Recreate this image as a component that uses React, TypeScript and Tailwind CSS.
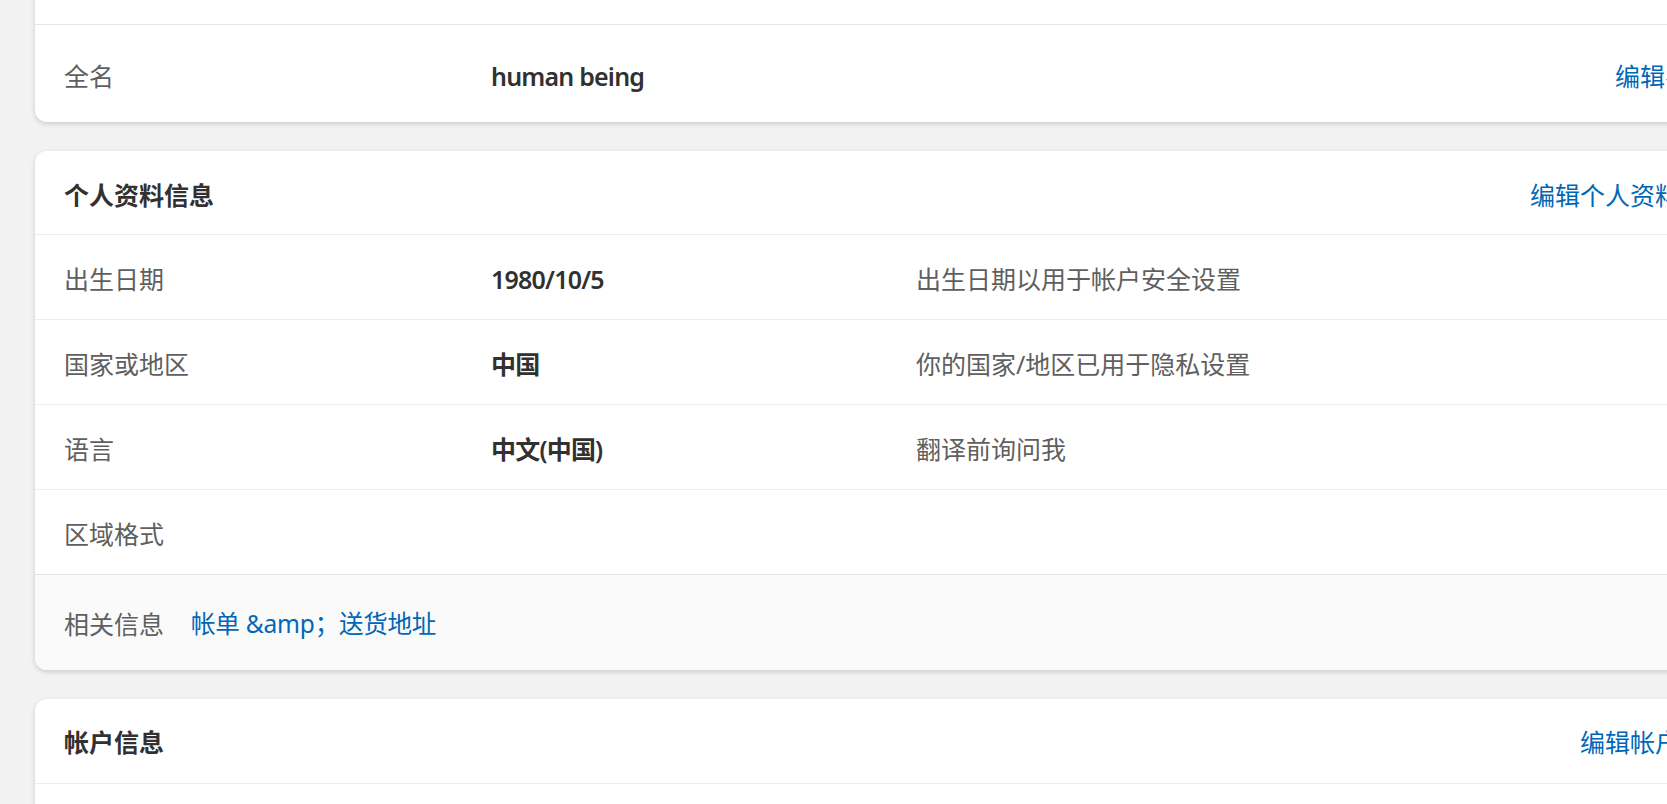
import React from 'react';

const FONT = '"Segoe UI", "Noto Sans", "Noto Sans CJK SC", sans-serif';

type Row = { label: string; value?: string; note?: string };

const profileRows: Row[] = [
  { label: '出生日期', value: '1980/10/5', note: '出生日期以用于帐户安全设置' },
  { label: '国家或地区', value: '中国', note: '你的国家/地区已用于隐私设置' },
  { label: '语言', value: '中文(中国)', note: '翻译前询问我' },
  { label: '区域格式' },
];

function InfoRow({ row }: { row: Row }) {
  return (
    <div className="grid grid-cols-[427px_425px_1fr] items-center h-[85px] border-t border-[#ececec] pl-[29px] pt-[5px]">
      <span className="text-[#5f5f5f]">{row.label}</span>
      <span className="text-[#323130] font-semibold tracking-[-0.8px]">{row.value}</span>
      <span className="text-[#5f5f5f]">{row.note}</span>
    </div>
  );
}

export default function App() {
  return (
    <div
      className="w-full h-[804px] overflow-hidden bg-[#f2f2f2] text-[25px] leading-none"
      style={{ fontFamily: FONT }}
    >
      <div className="flex flex-col gap-[29px] pl-[35px] -mt-[61px]">
        {/* Name card, scrolled partly out of view */}
        <div className="w-[1722px] shrink-0 bg-white rounded-xl shadow-[0_2px_5px_rgba(0,0,0,0.16)] overflow-hidden">
          <div className="h-[85px]" />
          <div className="flex items-center h-[98px] border-t border-[#e6e6e6] pl-[29px] pr-[27px] pt-[6px]">
            <span className="w-[427px] text-[#5f5f5f]">全名</span>
            <span className="flex-1 font-semibold text-[#323130] tracking-[-0.8px]">human being</span>
            <a href="#" className="text-[#0067b8] mr-[15px]">编辑名称</a>
          </div>
        </div>

        {/* Profile info */}
        <div className="w-[1722px] shrink-0 bg-white rounded-xl shadow-[0_2px_5px_rgba(0,0,0,0.16)] overflow-hidden">
          <div className="flex items-center justify-between h-[83px] pl-[29px] pr-[27px] pt-[6px]">
            <span className="font-bold text-[#323130]">个人资料信息</span>
            <a href="#" className="text-[#0067b8]">编辑个人资料信息</a>
          </div>
          {profileRows.map(r => (
            <InfoRow key={r.label} row={r} />
          ))}
          <div className="flex items-center gap-[27px] h-[96px] border-t border-[#e3e3e3] bg-[#fafafa] pl-[29px] pt-[4px]">
            <span className="text-[#5f5f5f]">相关信息</span>
            <a href="#" className="text-[#0067b8] text-[24.5px] tracking-[-0.2px]">{'帐单 &amp；送货地址'}</a>
          </div>
        </div>

        {/* Account info */}
        <div className="w-[1722px] shrink-0 bg-white rounded-xl shadow-[0_2px_5px_rgba(0,0,0,0.16)] overflow-hidden">
          <div className="flex items-center justify-between h-[84px] pl-[29px] pr-[27px] pt-[3px]">
            <span className="font-bold text-[#323130]">帐户信息</span>
            <a href="#" className="text-[#0067b8]">编辑帐户信息</a>
          </div>
          <div className="h-[85px] border-t border-[#ececec]" />
        </div>
      </div>
    </div>
  );
}
